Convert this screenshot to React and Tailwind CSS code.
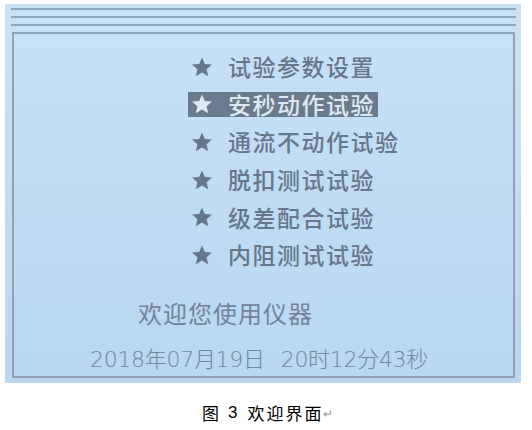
function Star({ className }) {
  return (
    <svg viewBox="0 0 24 24" className={className} fill="currentColor">
      <path d="M12 1.5l3.1 7.2 7.8.6-5.9 5.1 1.8 7.6L12 18l-6.8 4 1.8-7.6-5.9-5.1 7.8-.6z" />
    </svg>
  );
}

export default function App() {
  const items = [
    "试验参数设置",
    "安秒动作试验",
    "通流不动作试验",
    "脱扣测试试验",
    "级差配合试验",
    "内阻测试试验",
  ];
  const selected = 1;

  return (
    <div className="w-[532px] h-[430px] bg-white flex flex-col overflow-hidden">
      {/* LCD photo */}
      <div className="ml-[5px] mt-[4px] w-[516px] h-[379px] bg-[linear-gradient(180deg,#c8e2f6_0%,#c0dcf3_50%,#b9d7f0_100%)] flex flex-col">
        <div className="mt-[4px] ml-[6px] w-[505px] flex flex-col gap-[6px]">
          <div className="h-[2px] bg-[#94a6ba]" />
          <div className="h-[2px] bg-[#94a6ba]" />
          <div className="h-[2px] bg-[#94a6ba]" />
        </div>
        <div
          className="mt-[6px] ml-[7px] w-[503px] h-[346px] border-2 border-[#8fa1b6] flex flex-col"
          style={{ fontFamily: '"Noto Sans CJK SC", sans-serif' }}
        >
          <div className="pt-[14px] pl-[174px] flex flex-col">
            {items.map((t, i) => (
              <div key={t} className="h-[37.6px] flex items-center">
                <div
                  className={
                    "flex items-center h-[25px] pl-[3px] pr-[3px] " +
                    (i === selected ? "bg-[#6b7b8d] text-[#dce9f5]" : "text-[#667789]")
                  }
                >
                  <span className="w-[37px] flex items-center">
                    <Star className="w-[22px] h-[22px]" />
                  </span>
                  <span className="text-[23px] font-medium leading-none tracking-[1.5px]">{t}</span>
                </div>
              </div>
            ))}
          </div>
          <div className="mt-[27px] pl-[124px] text-[24px] leading-none text-[#72839a] tracking-[1px]">
            欢迎您使用仪器
          </div>
          <div
            className="mt-[24px] pl-[76px] text-[22px] leading-none text-[#74869c] font-light tracking-[-0.3px]"
            style={{ fontFamily: '"DejaVu Sans", "Noto Sans CJK SC", sans-serif' }}
          >
            2018年07月19日<span className="ml-[16px]">20时12分43秒</span>
          </div>
        </div>
      </div>
      {/* caption */}
      <div className="mt-[21px] pl-[202px] flex items-center text-[17px] text-black leading-none" style={{ fontFamily: '"Noto Sans CJK SC", sans-serif' }}>
        <span>图</span>
        <span className="ml-[9px]" style={{ fontFamily: '"Liberation Sans", sans-serif' }}>3</span>
        <span className="ml-[10px] tracking-[2px]">欢迎界面</span>
        <span className="text-[12px] text-[#999]">↵</span>
      </div>
    </div>
  );
}
